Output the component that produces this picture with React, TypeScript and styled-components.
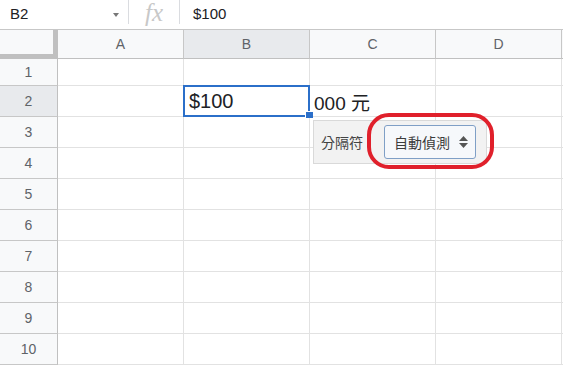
import React from "react";
import styled, { createGlobalStyle } from "styled-components";

const Global = createGlobalStyle`
  html, body { margin: 0; padding: 0; background: #fff; }
  body { font-family: "Liberation Sans", Arial, "Noto Sans CJK TC", sans-serif; overflow: hidden; }
  * { box-sizing: border-box; }
`;

const Page = styled.div`
  position: relative;
  width: 563px;
  height: 365px;
  overflow: hidden;
`;

const FormulaBar = styled.div`
  display: flex;
  align-items: stretch;
  height: 30px;
  border-bottom: 1px solid #c7c7c7;
`;

const NameBox = styled.div`
  width: 128px;
  display: flex;
  align-items: center;
  justify-content: space-between;
  padding: 0 9px 2px 10px;
  font-size: 15px;
  color: #202124;
`;

const Caret = styled.span`
  width: 0;
  height: 0;
  border-left: 3.5px solid transparent;
  border-right: 3.5px solid transparent;
  border-top: 4px solid #777;
  margin-top: 3px;
`;

const Sep = styled.div`
  width: 1px;
  height: 24px;
  background: #dadce0;
`;

const FxBox = styled.div`
  width: 50px;
  height: 26px;
  display: flex;
  align-items: center;
  justify-content: center;
  font-family: "Liberation Serif", "Times New Roman", serif;
  font-style: italic;
  font-size: 25px;
  line-height: 26px;
  color: #c8c8c8;
`;

const FormulaText = styled.div`
  display: flex;
  align-items: center;
  padding: 0 0 2px 13px;
  font-size: 15px;
  color: #202124;
`;

const Grid = styled.div`
  display: grid;
  grid-template-columns: 58px repeat(4, 126px) 1fr;
  grid-template-rows: 29px 27px repeat(9, 31px);
`;

const Corner = styled.div`
  background: #f8f9fa;
  border-right: 5px solid #c0c0c0;
  border-bottom: 5px solid #c0c0c0;
`;

const ColHead = styled.div<{ $active?: boolean }>`
  background: ${(p) => (p.$active ? "#e8eaed" : "#f8f9fa")};
  border-right: 1px solid #c7c7c7;
  border-bottom: 1px solid #c0c0c0;
  display: flex;
  align-items: center;
  justify-content: center;
  font-size: 14px;
  color: #5f6368;
`;

const RowHead = styled.div<{ $active?: boolean }>`
  background: ${(p) => (p.$active ? "#e8eaed" : "#f8f9fa")};
  border-right: 1px solid #c0c0c0;
  border-bottom: 1px solid #c7c7c7;
  display: flex;
  align-items: center;
  justify-content: center;
  font-size: 14px;
  color: #5f6368;
`;

const Cell = styled.div`
  background: #fff;
  border-right: 1px solid #e2e2e2;
  border-bottom: 1px solid #e2e2e2;
`;

const Filler = styled.div<{ $head?: boolean }>`
  background: ${(p) => (p.$head ? "#f8f9fa" : "#fff")};
  border-bottom: 1px solid ${(p) => (p.$head ? "#c0c0c0" : "#e2e2e2")};
`;

const Selection = styled.div`
  position: absolute;
  left: 183px;
  top: 85px;
  width: 127px;
  height: 32px;
  border: 2px solid #2b6fc9;
  display: flex;
  align-items: center;
  padding-left: 4px;
  font-size: 20px;
  color: #202124;
  background: #fff;
`;

const FillHandle = styled.div`
  position: absolute;
  left: 305px;
  top: 111px;
  width: 8px;
  height: 7px;
  background: #2b6fc9;
  border: 1px solid #fff;
  border-width: 1px 0 0 1px;
`;

const Spill = styled.div`
  position: absolute;
  left: 314px;
  top: 88px;
  height: 27px;
  display: flex;
  align-items: center;
  font-size: 19px;
  color: #202124;
`;

const Popup = styled.div`
  position: absolute;
  left: 313px;
  top: 120px;
  width: 174px;
  height: 44px;
  background: #f2f2f2;
  border: 1px solid #d9d9d9;
  display: flex;
  align-items: center;
  padding-left: 7px;
  gap: 21px;
  font-family: "Noto Sans CJK TC", "Liberation Sans", sans-serif;
`;

const Label = styled.span`
  font-size: 14px;
  color: #444;
`;

const Select = styled.div`
  width: 92px;
  height: 34px;
  border: 1px solid #7f9fc6;
  border-radius: 3px;
  background: #f6f8fb;
  display: flex;
  align-items: center;
  justify-content: space-between;
  padding: 0 6px 0 9px;
  font-size: 14px;
  color: #3c3c3c;
`;

const Ring = styled.div`
  position: absolute;
  left: 367px;
  top: 113px;
  width: 127px;
  height: 56px;
  border: 4px solid #e0202b;
  border-radius: 22px;
`;

const cols = ["A", "B", "C", "D"];

export default function App() {
  const rows = Array.from({ length: 10 }, (_, i) => i + 1);
  return (
    <Page>
      <Global />
      <FormulaBar>
        <NameBox>
          <span>B2</span>
          <Caret />
        </NameBox>
        <Sep />
        <FxBox>fx</FxBox>
        <Sep />
        <FormulaText>$100</FormulaText>
      </FormulaBar>
      <Grid>
        <Corner />
        {cols.map((c) => (
          <ColHead key={c} $active={c === "B"}>
            {c}
          </ColHead>
        ))}
        <Filler $head />
        {rows.map((r) => (
          <React.Fragment key={r}>
            <RowHead $active={r === 2}>{r}</RowHead>
            {cols.map((c) => (
              <Cell key={c} />
            ))}
            <Filler />
          </React.Fragment>
        ))}
      </Grid>
      <Selection>$100</Selection>
      <FillHandle />
      <Spill>000 元</Spill>
      <Popup>
        <Label>分隔符</Label>
        <Select>
          <span>自動偵測</span>
          <svg width="11" height="14" viewBox="0 0 11 14">
            <path d="M5.5 1 L10 6 L1 6 Z" fill="#555" />
            <path d="M5.5 13 L10 8 L1 8 Z" fill="#555" />
          </svg>
        </Select>
      </Popup>
      <Ring />
    </Page>
  );
}
